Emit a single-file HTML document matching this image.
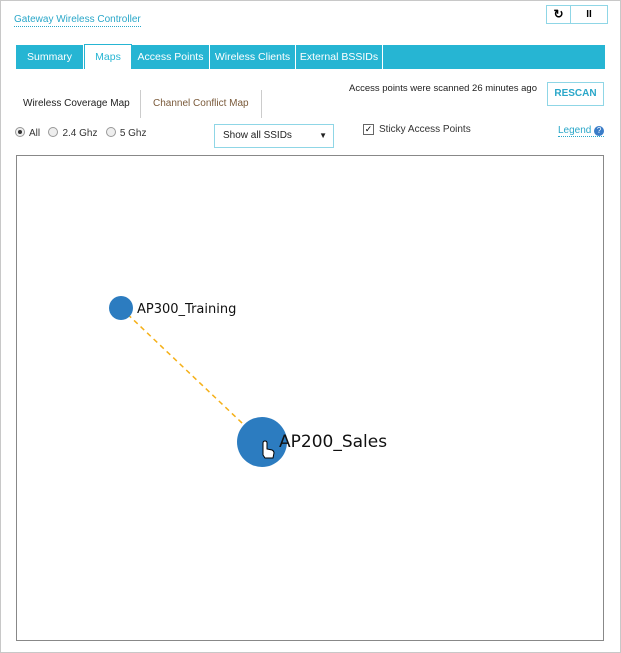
<!DOCTYPE html>
<html><head><style>
body{margin:0;width:621px;height:653px;background:#fff;font-family:"Liberation Sans",sans-serif;position:relative;overflow:hidden}
.frame{position:absolute;left:0;top:0;width:619px;height:651px;border:1px solid #c8c8c8}
.a{position:absolute;white-space:nowrap}
.tabs{position:absolute;left:16px;top:45px;width:589px;height:24px;background:#26b5d3}
.tab{position:absolute;top:0;height:24px;line-height:24px;color:#fff;font-size:10.5px;text-align:center;border-right:1px solid #fff}
.btn{position:absolute;border:1px solid #8fd6e6;background:#fff;box-sizing:border-box}
.radio{display:inline-block;width:8px;height:8px;border:1px solid #999;border-radius:50%;background:#eee;vertical-align:-1px;margin-right:4px;position:relative}
</style></head><body>
<div class="frame"></div>
<div class="a" style="left:14px;top:14px;font-size:10px;color:#2aa7c9;border-bottom:1px dotted #2aa7c9;padding-bottom:1px">Gateway Wireless Controller</div>
<div class="btn" style="left:546px;top:5px;width:25px;height:19px;text-align:center;font-size:12px;line-height:17px;font-weight:bold">↻</div>
<div class="btn" style="left:570px;top:5px;width:38px;height:19px;text-align:center;font-size:10px;line-height:17px;font-weight:bold">II</div>
<div class="tabs">
<div class="tab" style="left:0;width:67px">Summary</div>
<div class="tab" style="left:68px;width:48px;background:#fff;color:#26b5d3;top:-1px;height:25px;border:1px solid #26b5d3;border-bottom:none;box-sizing:border-box">Maps</div>
<div class="tab" style="left:116px;width:77px">Access Points</div>
<div class="tab" style="left:194px;width:85px">Wireless Clients</div>
<div class="tab" style="left:280px;width:86px">External BSSIDs</div>
</div>
<div class="a" style="left:349px;top:83px;font-size:9.5px;color:#222">Access points were scanned 26 minutes ago</div>
<div class="btn" style="left:547px;top:82px;width:57px;height:24px;line-height:22px;text-align:center;font-size:10px;color:#2aa7c9;font-weight:bold">RESCAN</div>
<div class="a" style="left:23px;top:98px;font-size:10px;color:#222">Wireless Coverage Map</div>
<div class="a" style="left:140px;top:90px;width:1px;height:28px;background:#ccc"></div>
<div class="a" style="left:153px;top:98px;font-size:10px;color:#7a5a3a">Channel Conflict Map</div>
<div class="a" style="left:261px;top:90px;width:1px;height:28px;background:#ccc"></div>
<div class="a" style="left:15px;top:127px;font-size:10px;color:#333"><span class="radio"><span style="position:absolute;left:2px;top:2px;width:4px;height:4px;border-radius:50%;background:#333"></span></span>All &nbsp; <span class="radio"></span>2.4 Ghz &nbsp; <span class="radio"></span>5 Ghz</div>
<div class="btn" style="left:214px;top:124px;width:120px;height:24px;font-size:10px;line-height:22px;color:#222"><span style="margin-left:8px">Show all SSIDs</span><span style="position:absolute;right:6px;font-size:8px">▼</span></div>
<div class="a" style="left:363px;top:124px;width:9px;height:9px;border:1px solid #666;font-size:9px;line-height:9px;text-align:center">✓</div>
<div class="a" style="left:379px;top:124px;font-size:10px;color:#333">Sticky Access Points</div>
<div class="a" style="left:558px;top:125px;font-size:10px;color:#2aa7c9;border-bottom:1px dotted #2aa7c9">Legend <span style="display:inline-block;width:10px;height:10px;border-radius:50%;background:#3a7cc8;color:#fff;font-size:8px;text-align:center;line-height:10px">?</span></div>
<div class="a" style="left:16px;top:155px;width:586px;height:484px;border:1px solid #888"></div>
<svg class="a" style="left:0;top:0" width="621" height="653">
<line x1="121" y1="308" x2="262" y2="442" stroke="#f5b018" stroke-width="1.5" stroke-dasharray="5,4"/>
<circle cx="121" cy="308" r="12" fill="#2c7cc0"/>
<circle cx="262" cy="442" r="25" fill="#2c7cc0"/>
<text x="137" y="313" font-size="13" font-family="DejaVu Sans, sans-serif" fill="#111">AP300_Training</text>
<text x="279" y="447" font-size="17" font-family="DejaVu Sans, sans-serif" fill="#111">AP200_Sales</text>
<path d="M263 455 l0-12 q0-2 2-2 q2 0 2 2 v6 l5 1 q2 1 2 3 l-1 5 h-8 z" fill="#fff" stroke="#000" stroke-width="1"/>
</svg>
</body></html>
